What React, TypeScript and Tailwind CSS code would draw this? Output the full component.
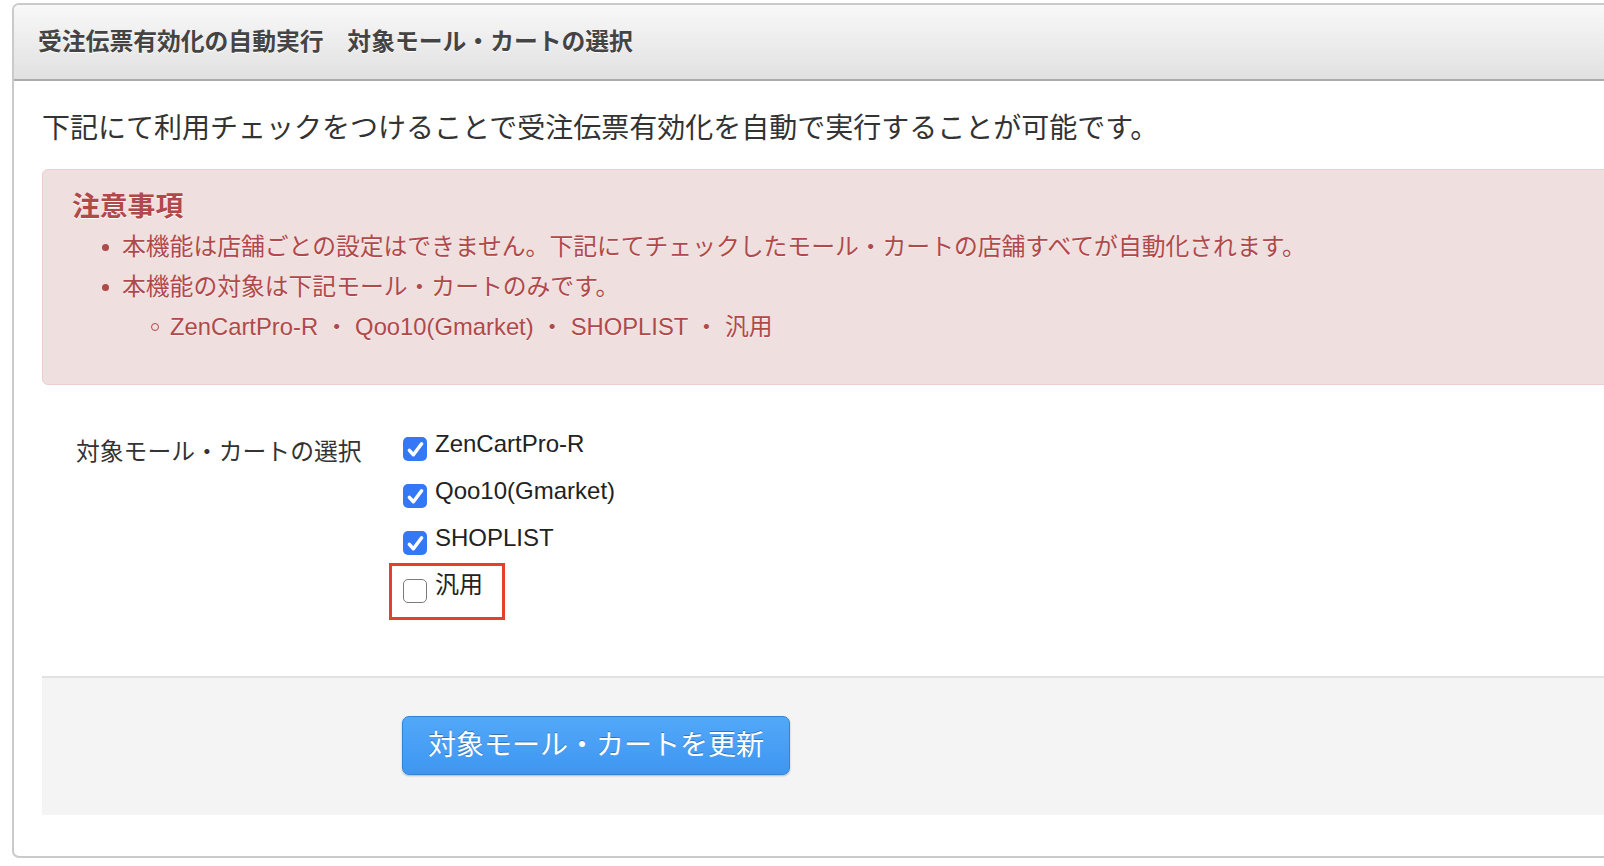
import { useState } from 'react'

const font = { fontFamily: '"Liberation Sans", "Noto Sans CJK JP", sans-serif' }

const malls = [
  { id: 'zencart', label: 'ZenCartPro-R', checked: true },
  { id: 'qoo10', label: 'Qoo10(Gmarket)', checked: true },
  { id: 'shoplist', label: 'SHOPLIST', checked: true },
  { id: 'generic', label: '汎用', checked: false },
]

function CheckBox({ checked }: { checked: boolean }) {
  if (!checked) {
    return <span className="mt-[9px] block h-[24px] w-[24px] shrink-0 rounded-[5px] border-[1.5px] border-[#7b7b7b] bg-white" />
  }
  return (
    <span className="mt-[8px] flex h-[24px] w-[24px] shrink-0 items-center justify-center rounded-[5px] bg-[#3478f6]">
      <svg viewBox="0 0 24 24" className="h-[21px] w-[21px]" fill="none" stroke="white" strokeWidth="4" strokeLinecap="round" strokeLinejoin="round">
        <path d="M5 13l4.6 5L19 5.5" />
      </svg>
    </span>
  )
}

export default function App() {
  const [state, setState] = useState(malls)

  const toggle = (id: string) => {
    setState((prev) => prev.map((m) => (m.id === id ? { ...m, checked: !m.checked } : m)))
  }

  return (
    <div className="h-[866px] w-[1604px] overflow-hidden bg-white" style={font}>
      <div className="ml-[12px] mt-[3px] w-[1660px] overflow-hidden rounded-[7px] border-2 border-[#cacaca]">
        {/* Header */}
        <div className="flex h-[76px] items-center border-b-2 border-[#ababab] bg-gradient-to-b from-[#f8f8f8] to-[#e1e1e1] pl-[24px]">
          <h2 className="text-[23.8px] font-bold text-[#444] [text-shadow:0_1px_0_#fff]">
            受注伝票有効化の自動実行　対象モール・カートの選択
          </h2>
        </div>

        {/* Body */}
        <div className="pl-[28px] pt-[28px]">
          <p className="text-[28px] leading-[40px] text-[#333]">
            下記にて利用チェックをつけることで受注伝票有効化を自動で実行することが可能です。
          </p>

          <div className="mt-[20px] h-[216px] rounded-l-[6px] border border-[#ebcdd2] bg-[#f0dfdf] pl-[29px] pt-[17px] text-[#b0494a]">
            <h4 className="text-[27.8px] font-bold leading-[40px] [text-shadow:0_1px_0_#fff]">注意事項</h4>
            <ul className="text-[23.8px] leading-[40px] [text-shadow:0_1px_0_rgba(255,255,255,0.6)]">
              <li className="flex items-center">
                <span className="ml-[30px] mr-[13px] block h-[7px] w-[7px] rounded-full bg-[#b0494a]" />
                本機能は店舗ごとの設定はできません。下記にてチェックしたモール・カートの店舗すべてが自動化されます。
              </li>
              <li className="flex items-center">
                <span className="ml-[30px] mr-[13px] block h-[7px] w-[7px] rounded-full bg-[#b0494a]" />
                本機能の対象は下記モール・カートのみです。
              </li>
              <li className="flex items-center">
                <span className="ml-[79px] mr-[11px] block h-[8px] w-[8px] rounded-full border border-[#b0494a]" />
                <span>
                  ZenCartPro-R ・ Qoo10(Gmarket) ・ SHOPLIST ・ 汎用
                </span>
              </li>
            </ul>
          </div>

          {/* Form */}
          <div className="mt-[44px] flex">
            <label className="mt-[8px] w-[361px] pl-[34px] text-[23.8px] leading-[30px] text-[#333]">
              対象モール・カートの選択
            </label>
            <div className="flex flex-col">
              {state.map((m) => (
                <div
                  key={m.id}
                  className="relative flex h-[47px] cursor-pointer items-start gap-[8px]"
                  onClick={() => toggle(m.id)}
                >
                  <CheckBox checked={m.checked} />
                  <span className="text-[24px] leading-[30px] text-[#222]">{m.label}</span>
                  {m.id === 'generic' && (
                    <span className="pointer-events-none absolute -left-[14px] -top-[7px] h-[57px] w-[116px] border-[3px] border-[#e5402b]" />
                  )}
                </div>
              ))}
            </div>
          </div>

          {/* Footer */}
          <div className="mt-[59px] h-[139px] border-t-2 border-[#e2e2e2] bg-[#f4f4f4] pl-[360px] pt-[38px]">
            <button className="h-[59px] rounded-[7px] border border-[#3582d6] bg-gradient-to-b from-[#52a8f8] to-[#3f96f1] px-[25px] text-[28px] text-white shadow-[0_1px_2px_rgba(0,0,0,0.25)] [text-shadow:0_-1px_0_rgba(0,0,0,0.3)]">
              対象モール・カートを更新
            </button>
          </div>
          <div className="h-[41px]" />
        </div>
      </div>
    </div>
  )
}
